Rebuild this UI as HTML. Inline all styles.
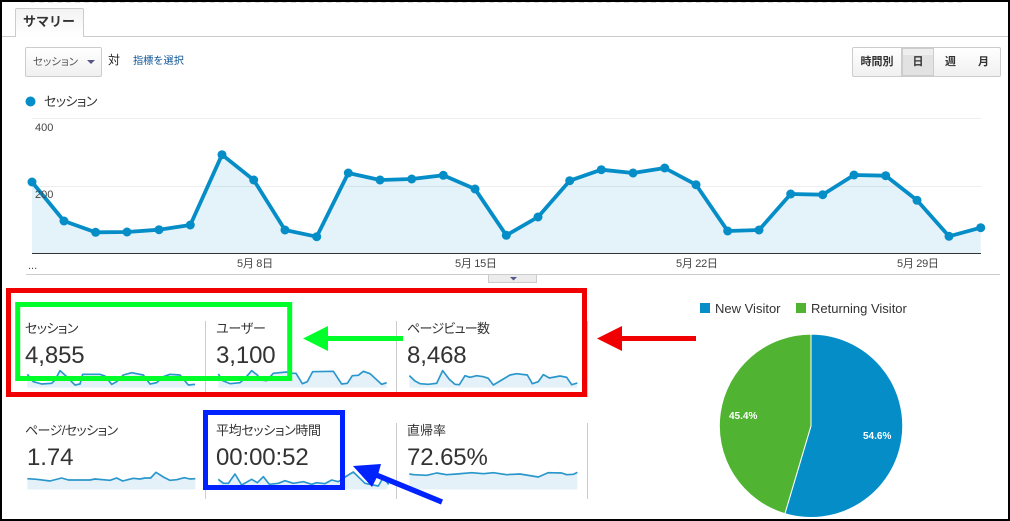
<!DOCTYPE html>
<html lang="ja"><head><meta charset="utf-8"><style>
html,body{margin:0;padding:0;background:#fff}
#p{position:relative;width:1010px;height:521px;overflow:hidden;background:#fff;font-family:"Liberation Sans","Noto Sans CJK JP",sans-serif;color:#333}
#p div,#p span{position:absolute;white-space:nowrap}
.j{font-feature-settings:"palt";font-size:13px;line-height:16px;color:#333}
.n{font-size:24px;line-height:28px;color:#333;letter-spacing:-.1px}
.a{font-size:11px;line-height:13px;color:#444}
.d{font-feature-settings:"palt"}
svg{position:absolute;left:0;top:0}
.btn{top:47px;height:30px;box-sizing:border-box;background:linear-gradient(#fff,#f0f0f0);border:1px solid #ccc;font-size:11px;font-weight:bold;line-height:28px;text-align:center;color:#333}
</style></head><body><div id="p">
<div style="left:15px;top:8px;width:69px;height:29px;box-sizing:border-box;border:1px solid #ccc;border-bottom:none;border-radius:2px 2px 0 0;background:linear-gradient(#f3f3f3,#fff);z-index:2"></div>
<div style="left:23px;top:13px;font-size:13px;font-weight:bold;line-height:18px;color:#333;z-index:3">サマリー</div>
<div style="left:25px;top:47px;width:77px;height:30px;box-sizing:border-box;border:1px solid #ccc;border-radius:2px;background:linear-gradient(#fff,#f0f0f0)"></div>
<div class="d" style="left:33px;top:55px;font-size:10.5px;line-height:15px;color:#555">セッション</div>
<div style="left:108px;top:52px;font-size:12px;line-height:16px;color:#222">対</div>
<div style="left:133px;top:54px;font-size:10.2px;line-height:15px;color:#0b5394">指標を選択</div>
<div class="btn" style="left:852px;width:50px;border-radius:2px 0 0 2px">時間別</div>
<div class="btn" style="left:901px;width:34px;background:#e2e2e2;border:2px solid #ccc;line-height:27px"><span style="left:0;right:0;top:0;height:6px;background:#eee"></span><span style="left:0;right:0;top:0">日</span></div>
<div class="btn" style="left:934px;width:34px;border-left:none;border-right:1px solid #ccc">週</div>
<div class="btn" style="left:967px;width:34px;border-left:none;border-radius:0 2px 2px 0">月</div>
<div class="j" style="left:44px;top:94px;letter-spacing:-.6px">セッション</div>

<svg width="1010" height="521" viewBox="0 0 1010 521">
<line x1="30" y1="2.5" x2="962" y2="2.5" stroke="#ddd" stroke-dasharray="5 4"/>
<line x1="0" y1="36.5" x2="1010" y2="36.5" stroke="#ccc"/>
<polygon points="87,60 95,60 91,64" fill="#55558a"/>
<circle cx="30.5" cy="101.5" r="5" fill="#058dc7"/>
<line x1="32" y1="118.5" x2="981" y2="118.5" stroke="#eee"/>
<line x1="32" y1="186.5" x2="981" y2="186.5" stroke="#eee"/>
<rect x="35" y="187" width="19" height="13" fill="#fff"/>
<polygon fill="#058dc7" fill-opacity=".11" points="32,253 32,182 64,221 95.6,232.3 127,232 159,229.7 190.3,225 222,154.7 253.7,180 285,230 316.7,236.7 348.3,173 380,180 411.7,179 443.3,175.3 475,189 506.3,235.3 538,217 569.7,180.7 601.3,169.7 633,173 664.7,168 696,184.7 727.7,231 759,230 790.7,194 822.7,194.7 854,175 885.7,175.7 917,200.3 949,236.3 980.7,227.7 980.7,253"/>
<polygon fill="#fff" points="35,187 54,187 54,200 48,200 35,190"/>
<polyline fill="none" stroke="#058dc7" stroke-width="3.8" stroke-linejoin="round" points="32,182 64,221 95.6,232.3 127,232 159,229.7 190.3,225 222,154.7 253.7,180 285,230 316.7,236.7 348.3,173 380,180 411.7,179 443.3,175.3 475,189 506.3,235.3 538,217 569.7,180.7 601.3,169.7 633,173 664.7,168 696,184.7 727.7,231 759,230 790.7,194 822.7,194.7 854,175 885.7,175.7 917,200.3 949,236.3 980.7,227.7"/>
<g fill="#058dc7"><circle cx="32" cy="182" r="4.5"/><circle cx="64" cy="221" r="4.5"/><circle cx="95.6" cy="232.3" r="4.5"/><circle cx="127" cy="232" r="4.5"/><circle cx="159" cy="229.7" r="4.5"/><circle cx="190.3" cy="225" r="4.5"/><circle cx="222" cy="154.7" r="4.5"/><circle cx="253.7" cy="180" r="4.5"/><circle cx="285" cy="230" r="4.5"/><circle cx="316.7" cy="236.7" r="4.5"/><circle cx="348.3" cy="173" r="4.5"/><circle cx="380" cy="180" r="4.5"/><circle cx="411.7" cy="179" r="4.5"/><circle cx="443.3" cy="175.3" r="4.5"/><circle cx="475" cy="189" r="4.5"/><circle cx="506.3" cy="235.3" r="4.5"/><circle cx="538" cy="217" r="4.5"/><circle cx="569.7" cy="180.7" r="4.5"/><circle cx="601.3" cy="169.7" r="4.5"/><circle cx="633" cy="173" r="4.5"/><circle cx="664.7" cy="168" r="4.5"/><circle cx="696" cy="184.7" r="4.5"/><circle cx="727.7" cy="231" r="4.5"/><circle cx="759" cy="230" r="4.5"/><circle cx="790.7" cy="194" r="4.5"/><circle cx="822.7" cy="194.7" r="4.5"/><circle cx="854" cy="175" r="4.5"/><circle cx="885.7" cy="175.7" r="4.5"/><circle cx="917" cy="200.3" r="4.5"/><circle cx="949" cy="236.3" r="4.5"/><circle cx="980.7" cy="227.7" r="4.5"/></g>
<line x1="32" y1="253.5" x2="981" y2="253.5" stroke="#333"/>
<line x1="26" y1="274.5" x2="1000" y2="274.5" stroke="#ccc"/>
<rect x="488.5" y="274.5" width="48" height="8" fill="#ececec" stroke="#ccc"/>
<polygon points="510,277 517,277 513.5,280.5" fill="#55558a"/>
<g stroke="#ccc"><line x1="205.5" y1="321" x2="205.5" y2="397"/><line x1="396.5" y1="321" x2="396.5" y2="397"/><line x1="587.5" y1="321" x2="587.5" y2="397"/><line x1="205.5" y1="423" x2="205.5" y2="499"/><line x1="396.5" y1="423" x2="396.5" y2="499"/><line x1="587.5" y1="423" x2="587.5" y2="499"/></g>

<g transform="translate(0 280) scale(.33333)" stroke-width="5" stroke-linejoin="round">
<polygon fill="#e4f1f8" points="82,323 82,283 100,305 125,312 155,310 165,300 180,272 200,290 225,315 240,312 248,283 300,283 315,288 335,313 350,305 370,285 395,278 430,285 450,312 470,308 490,290 510,283 540,285 565,315 585,313 585,323"/>
<polyline fill="none" stroke="#2a97cc" points="82,283 100,305 125,312 155,310 165,300 180,272 200,290 225,315 240,312 248,283 300,283 315,288 335,313 350,305 370,285 395,278 430,285 450,312 470,308 490,290 510,283 540,285 565,315 585,313"/>
<polygon fill="#e4f1f8" points="655,323 655,282 668,302 690,311 720,308 735,295 755,272 772,285 782,300 800,302 820,280 860,276 870,280 888,280 907,311 922,305 938,275 1000,274 1025,312 1042,310 1057,287 1075,286 1090,274 1110,281 1145,313 1160,308 1160,323"/>
<polyline fill="none" stroke="#2a97cc" points="655,282 668,302 690,311 720,308 735,295 755,272 772,285 782,300 800,302 820,280 860,276 870,280 888,280 907,311 922,305 938,275 1000,274 1025,312 1042,310 1057,287 1075,286 1090,274 1110,281 1145,313 1160,308"/>
</g>
<g transform="translate(290 280) scale(.33333)" stroke-width="5" stroke-linejoin="round">
<polygon fill="#e4f1f8" points="358,323 358,287 375,303 390,311 415,313 440,310 458,272 478,298 495,313 508,314 525,287 540,292 560,287 580,290 595,295 610,315 630,303 660,285 680,281 712,285 727,311 745,305 760,284 778,294 810,288 830,292 845,314 862,309 862,323"/>
<polyline fill="none" stroke="#2a97cc" points="358,287 375,303 390,311 415,313 440,310 458,272 478,298 495,313 508,314 525,287 540,292 560,287 580,290 595,295 610,315 630,303 660,285 680,281 712,285 727,311 745,305 760,284 778,294 810,288 830,292 845,314 862,309"/>
</g>
<g transform="translate(0 400) scale(.33333)" stroke-width="5" stroke-linejoin="round">
<polygon fill="#e4f1f8" points="82,268 82,236 110,238 150,243 185,234 205,240 270,240 285,237 330,241 350,234 368,243 400,235 420,237 435,234 452,234 468,217 490,231 510,241 530,239 553,233 570,237 586,236 586,268"/>
<polyline fill="none" stroke="#2a97cc" points="82,236 110,238 150,243 185,234 205,240 270,240 285,237 330,241 350,234 368,243 400,235 420,237 435,234 452,234 468,217 490,231 510,241 530,239 553,233 570,237 586,236"/>
<polygon fill="#e4f1f8" points="655,268 655,238 670,250 685,250 705,222 725,255 755,238 772,248 790,230 808,253 835,250 855,242 880,250 910,245 935,253 950,248 975,251 995,240 1015,245 1040,228 1060,216 1095,250 1135,258 1150,232 1165,252 1160,268"/>
<polyline fill="none" stroke="#2a97cc" points="655,238 670,250 685,250 705,222 725,255 755,238 772,248 790,230 808,253 835,250 855,242 880,250 910,245 935,253 950,248 975,251 995,240 1015,245 1040,228 1060,216 1095,250 1135,258 1150,232 1165,252 1160,243"/>
</g>
<g transform="translate(290 400) scale(.33333)" stroke-width="5" stroke-linejoin="round">
<polygon fill="#e4f1f8" points="358,268 358,222 372,224 410,226 440,219 470,224 500,222 545,218 580,221 610,218 650,224 690,222 745,231 775,218 815,219 830,224 850,223 862,217 862,268"/>
<polyline fill="none" stroke="#2a97cc" points="358,222 372,224 410,226 440,219 470,224 500,222 545,218 580,221 610,218 650,224 690,222 745,231 775,218 815,219 830,224 850,223 862,217"/>
</g>

<rect x="700" y="303" width="10" height="10" fill="#058dc7"/>
<rect x="796" y="303" width="10" height="10" fill="#50b432"/>
<path d="M811,425.8 L811,334.1 A91.7,91.7 0 1 1 784.9,513.7 Z" fill="#058dc7" stroke="#fff"/>
<path d="M811,425.8 L784.9,513.7 A91.7,91.7 0 0 1 811,334.1 Z" fill="#50b432" stroke="#fff"/>

<g fill="none">
<rect x="8.5" y="290.5" width="576" height="104" stroke="#f00000" stroke-width="5"/>
<rect x="17.7" y="304.5" width="272" height="74" stroke="#00ff2a" stroke-width="5"/>
<rect x="205.5" y="412.5" width="137" height="75" stroke="#0022ff" stroke-width="5"/>
</g>
<path d="M303,338.5 L328,326 L328,336 L403,336 L403,341 L328,341 L328,351 Z" fill="#00ff2a"/>
<path d="M597,338.5 L622,326 L622,336 L696,336 L696,341 L622,341 L622,351 Z" fill="#f00000"/>
<path d="M353,466 L381,464 L378.5,473 L443,499.5 L441,504.5 L376.5,478 L372,487 Z" fill="#0022ff"/>
</svg>

<div class="a" style="left:35px;top:122px">400</div>
<div class="a" style="left:35px;top:189px">200</div>
<div class="a" style="left:28px;top:260px">...</div>
<div class="a" style="left:237px;top:258px;letter-spacing:-.3px">5月 8日</div>
<div class="a" style="left:455px;top:258px;letter-spacing:-.3px">5月 15日</div>
<div class="a" style="left:676px;top:258px;letter-spacing:-.3px">5月 22日</div>
<div class="a" style="left:897px;top:258px;letter-spacing:-.3px">5月 29日</div>

<div class="j" style="left:25px;top:321px;letter-spacing:-.6px">セッション</div>
<div class="n" style="left:25px;top:342px">4,855</div>
<div class="j" style="left:216px;top:321px;letter-spacing:-.2px">ユーザー</div>
<div class="n" style="left:216px;top:342px">3,100</div>
<div class="j" style="left:407px;top:321px;letter-spacing:-.7px">ページビュー数</div>
<div class="n" style="left:407px;top:342px">8,468</div>
<div class="j" style="left:25px;top:423px;letter-spacing:-.6px">ページ/セッション</div>
<div class="n" style="left:27px;top:444px">1.74</div>
<div class="j" style="left:216px;top:423px;letter-spacing:-.35px">平均セッション時間</div>
<div class="n" style="left:216px;top:444px">00:00:52</div>
<div class="j" style="left:407px;top:423px">直帰率</div>
<div class="n" style="left:407px;top:444px">72.65%</div>

<div style="left:715px;top:301px;font-size:13px;line-height:16px;color:#333">New Visitor</div>
<div style="left:811px;top:301px;font-size:13px;line-height:16px;color:#333">Returning Visitor</div>
<div style="left:863px;top:430px;font-size:10px;font-weight:bold;line-height:14px;color:#fff">54.6%</div>
<div style="left:729px;top:410px;font-size:10px;font-weight:bold;line-height:14px;color:#fff">45.4%</div>

<div style="left:0;top:0;width:1010px;height:521px;box-sizing:border-box;border:2px solid #000"></div>
</div></body></html>
